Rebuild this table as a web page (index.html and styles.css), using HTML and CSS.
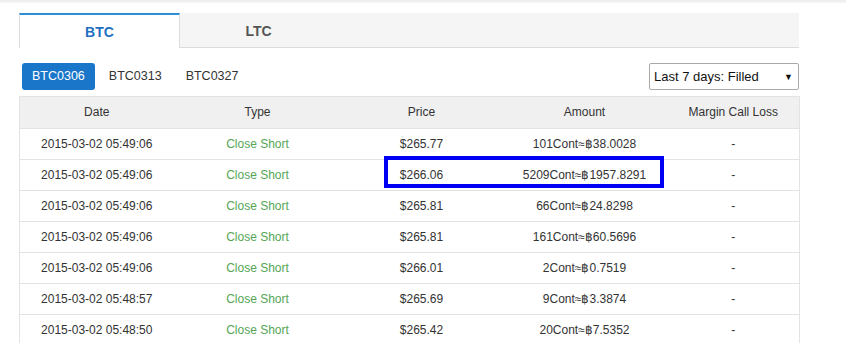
FILE: index.html
```html
<!DOCTYPE html>
<html>
<head>
<meta charset="utf-8">
<link rel="stylesheet" href="styles.css">
</head>
<body>
<div class="topbar"></div>
<div class="wrap">
  <div class="tabs">
    <div class="tab active">BTC</div>
    <div class="tab">LTC</div>
    <div class="tab-fill"></div>
  </div>
  <div class="subnav">
    <ul class="pills">
      <li class="pill on">BTC0306</li>
      <li class="pill">BTC0313</li>
      <li class="pill">BTC0327</li>
    </ul>
    <div class="select"><span>Last 7 days: Filled</span><span class="arrow">▼</span></div>
  </div>
  <table class="grid">
    <colgroup>
      <col class="c1"><col class="c2"><col class="c3"><col class="c4"><col class="c5">
    </colgroup>
    <thead>
      <tr><th>Date</th><th>Type</th><th>Price</th><th>Amount</th><th>Margin Call Loss</th></tr>
    </thead>
    <tbody>
      <tr><td>2015-03-02 05:49:06</td><td class="g">Close Short</td><td>$265.77</td><td>101Cont≈฿38.0028</td><td>-</td></tr>
      <tr><td>2015-03-02 05:49:06</td><td class="g">Close Short</td><td>$266.06</td><td>5209Cont≈฿1957.8291</td><td>-</td></tr>
      <tr><td>2015-03-02 05:49:06</td><td class="g">Close Short</td><td>$265.81</td><td>66Cont≈฿24.8298</td><td>-</td></tr>
      <tr><td>2015-03-02 05:49:06</td><td class="g">Close Short</td><td>$265.81</td><td>161Cont≈฿60.5696</td><td>-</td></tr>
      <tr><td>2015-03-02 05:49:06</td><td class="g">Close Short</td><td>$266.01</td><td>2Cont≈฿0.7519</td><td>-</td></tr>
      <tr><td>2015-03-02 05:48:57</td><td class="g">Close Short</td><td>$265.69</td><td>9Cont≈฿3.3874</td><td>-</td></tr>
      <tr><td>2015-03-02 05:48:50</td><td class="g">Close Short</td><td>$265.42</td><td>20Cont≈฿7.5352</td><td>-</td></tr>
    </tbody>
  </table>
  <div class="highlight"></div>
</div>
</body>
</html>
```
FILE: styles.css
```css
html, body {
  margin: 0;
  padding: 0;
  background: #fff;
  font-family: "Liberation Sans", Arial, sans-serif;
  color: #333;
  overflow: hidden;
}
.topbar {
  height: 3px;
  background: linear-gradient(#ebebeb, #f8f8f8);
}
.wrap {
  position: relative;
  margin: 10px 0 0 19px;
  width: 780px;
}
.tabs {
  display: flex;
  height: 35px;
  background: #f5f5f5;
}
.tab {
  width: 161px;
  box-sizing: border-box;
  display: flex;
  align-items: center;
  justify-content: center;
  font-weight: bold;
  font-size: 14px;
  color: #555;
  border-bottom: 1px solid #dcdcdc;
  padding-top: 2px;
}
.tab.active {
  background: #fff;
  color: #1f6fc2;
  border-top: 2px solid #2d8fd5;
  border-left: 1px solid #dcdcdc;
  border-right: 1px solid #dcdcdc;
  border-bottom: none;
  padding-top: 0;
}
.tab:nth-child(2) {
  padding-right: 4px;
}
.tab-fill {
  flex: 1;
  border-bottom: 1px solid #dcdcdc;
}
.subnav {
  display: flex;
  justify-content: space-between;
  align-items: center;
  margin-top: 15px;
  height: 27px;
}
.pills {
  display: flex;
  list-style: none;
  margin: 0 0 0 3px;
  padding: 0;
  gap: 4px;
}
.pill {
  height: 27px;
  line-height: 26px;
  padding: 0 10px;
  font-size: 12.5px;
  color: #333;
  border-radius: 3px;
}
.pill.on {
  background: #1976c9;
  color: #fff;
}
.select {
  box-sizing: border-box;
  width: 150px;
  height: 27px;
  border: 1px solid #a9a9a9;
  border-radius: 2px;
  display: flex;
  align-items: center;
  justify-content: space-between;
  padding: 0 5px 0 4px;
  font-size: 13px;
  color: #111;
}
.arrow {
  font-size: 9px;
}
.grid {
  margin-top: 6px;
  width: 780px;
  border-collapse: collapse;
  table-layout: fixed;
  font-size: 12px;
  border-left: 1px solid #e3e3e3;
  border-right: 1px solid #e3e3e3;
}
.c1 { width: 154px; }
.c2 { width: 168px; }
.c3 { width: 160px; }
.c4 { width: 166px; }
.c5 { width: 132px; }
.grid th {
  background: #f0f0f0;
  font-weight: normal;
  color: #333;
  height: 30px;
  padding: 0 0 1px;
  border-top: 1px solid #e3e3e3;
  border-bottom: 1px solid #e3e3e3;
}
.grid td {
  height: 29px;
  padding: 0 0 1px;
  text-align: center;
  border-bottom: 1px solid #e3e3e3;
  white-space: nowrap;
}
.grid td.g {
  color: #55a655;
}
.highlight {
  position: absolute;
  left: 365px;
  top: 143px;
  width: 280px;
  height: 32px;
  box-sizing: border-box;
  border: 4px solid #0000f2;
}
```
